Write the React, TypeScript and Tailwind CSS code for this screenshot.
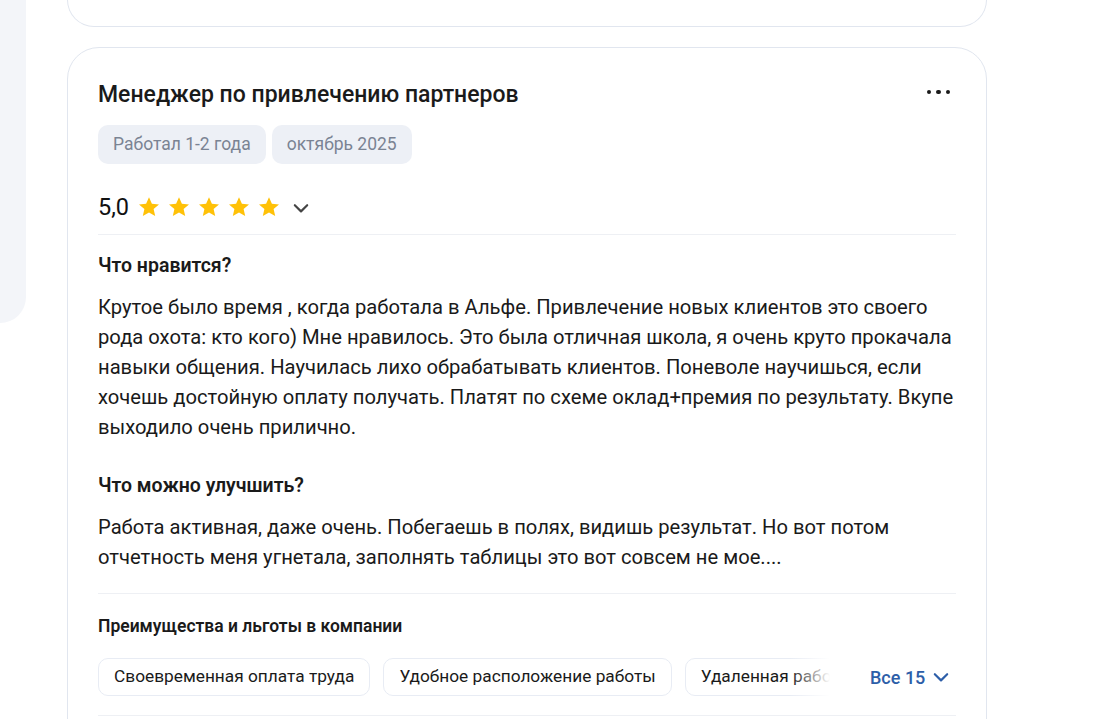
import React from "react";

const Star = () => (
  <svg width="24" height="24" viewBox="0 0 24 24">
    <path d="M12 2.2l2.9 6.6 7.1.6-5.4 4.7 1.6 7-6.2-3.7-6.2 3.7 1.6-7L2 9.4l7.1-.6z" fill="#FFC107" />
  </svg>
);

const Chevron = ({ color = "#444", size = 18 }: { color?: string; size?: number }) => (
  <svg width={size} height={size} viewBox="0 0 16 16" fill="none">
    <path d="M2.5 5.5L8 11l5.5-5.5" stroke={color} strokeWidth="1.9" strokeLinecap="round" strokeLinejoin="round" />
  </svg>
);

export default function App() {
  const font = { fontFamily: "Roboto, 'Noto Sans', sans-serif" };
  return (
    <div className="flex w-[1099px] h-[719px] overflow-hidden bg-white text-[#1a1a1a]" style={font}>
      <div className="w-[26px] h-[323px] shrink-0 bg-[#f3f5f9] rounded-br-[26px]" />
      <div className="ml-[41px] w-[920px] shrink-0 flex flex-col gap-[20px]">
        <div className="h-[27px] shrink-0 border-x border-b border-[#e1e6ef] rounded-b-[32px]" />
        <div className="shrink-0 border border-[#e1e6ef] rounded-[32px] px-[30px] pt-[33px] pb-[40px]">
          <div className="flex items-center justify-between">
            <h2 className="text-[23px] leading-[28px] font-medium text-[#1a1a1a]">Менеджер по привлечению партнеров</h2>
            <div className="flex gap-[5px] mr-[6px] -mt-[6px]">
              <span className="w-[4.5px] h-[4.5px] rounded-full bg-[#1a1a1a]" />
              <span className="w-[4.5px] h-[4.5px] rounded-full bg-[#1a1a1a]" />
              <span className="w-[4.5px] h-[4.5px] rounded-full bg-[#1a1a1a]" />
            </div>
          </div>
          <div className="flex gap-[6px] mt-[16px]">
            <span className="h-[39px] px-[15px] flex items-center rounded-[10px] bg-[#edf0f6] text-[17.5px] text-[#7a8393]">Работал 1-2 года</span>
            <span className="h-[39px] px-[15px] flex items-center rounded-[10px] bg-[#edf0f6] text-[17.5px] text-[#7a8393]">октябрь 2025</span>
          </div>
          <div className="flex items-center h-[32px] mt-[27px]">
            <span className="text-[23.5px] leading-[28px] text-[#111] mr-[8px]">5,0</span>
            <div className="flex gap-[6px]">
              <Star /><Star /><Star /><Star /><Star />
            </div>
            <span className="ml-[11px] mt-[2px]"><Chevron /></span>
          </div>
          <div className="h-px bg-[#eef0f4] mt-[11px]" />
          <h3 className="mt-[18px] text-[19.5px] leading-[26px] font-semibold text-[#1a1a1a]">Что нравится?</h3>
          <p className="mt-[13px] text-[20.2px] leading-[30px] text-[#1a1a1a]">
            Крутое было время , когда работала в Альфе. Привлечение новых клиентов это своего рода охота: кто кого) Мне нравилось. Это была отличная школа, я очень круто прокачала навыки общения. Научилась лихо обрабатывать клиентов. Поневоле научишься, если хочешь достойную оплату получать. Платят по схеме оклад+премия по результату. Вкупе выходило очень прилично.
          </p>
          <h3 className="mt-[31px] text-[19.5px] leading-[26px] font-semibold text-[#1a1a1a]">Что можно улучшить?</h3>
          <p className="mt-[13px] text-[20.2px] leading-[30px] text-[#1a1a1a]">
            Работа активная, даже очень. Побегаешь в полях, видишь результат. Но вот потом отчетность меня угнетала, заполнять таблицы это вот совсем не мое....
          </p>
          <div className="h-px bg-[#eef0f4] mt-[21px]" />
          <h4 className="mt-[20px] text-[17.5px] leading-[24px] font-semibold text-[#1a1a1a]">Преимущества и льготы в компании</h4>
          <div className="flex items-center mt-[20px]">
            <div className="relative w-[732px] shrink-0 overflow-hidden">
              <div className="flex gap-[13px] whitespace-nowrap">
                <span className="h-[38px] px-[15px] flex items-center rounded-[10px] border border-[#e8ecf4] text-[17.3px] shrink-0">Своевременная оплата труда</span>
                <span className="h-[38px] px-[15px] flex items-center rounded-[10px] border border-[#e8ecf4] text-[17.3px] shrink-0">Удобное расположение работы</span>
                <span className="h-[38px] px-[15px] flex items-center rounded-[10px] border border-[#e8ecf4] text-[17.3px] shrink-0">Удаленная работа</span>
              </div>
              <div className="absolute right-0 top-0 h-full w-[40px] bg-gradient-to-r from-transparent to-white" />
            </div>
            <button className="ml-[40px] flex items-center gap-[7px] text-[18px] font-medium text-[#2d5ea8]">
              Все 15
              <Chevron color="#2d5ea8" />
            </button>
          </div>
          <div className="h-px bg-[#eef0f4] mt-[19px]" />
        </div>
      </div>
    </div>
  );
}
